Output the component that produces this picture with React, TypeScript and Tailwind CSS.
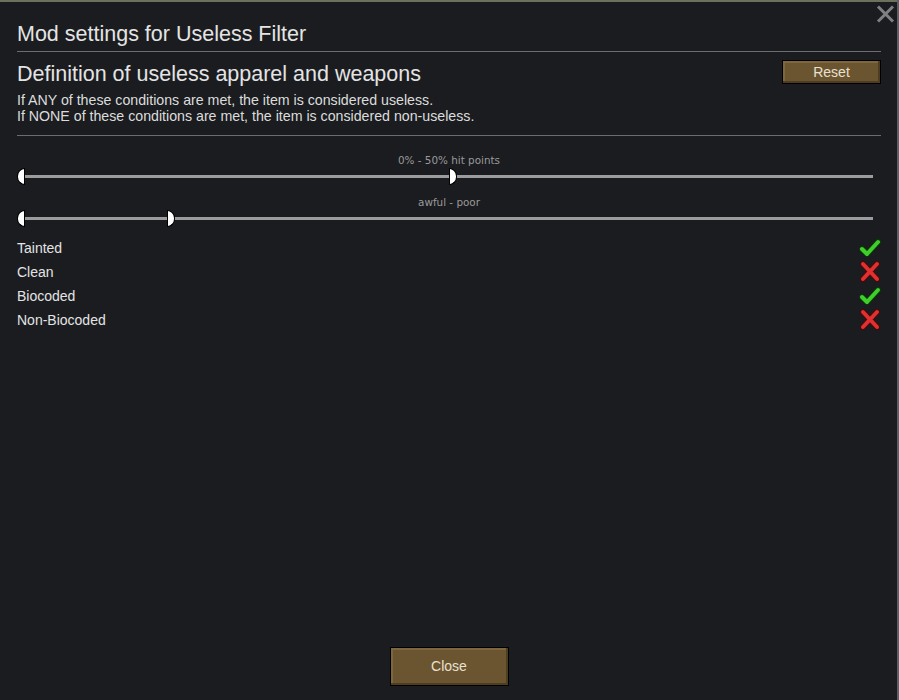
import { X } from 'lucide-react';

const rows = [
  { label: 'Tainted', on: true },
  { label: 'Clean', on: false },
  { label: 'Biocoded', on: true },
  { label: 'Non-Biocoded', on: false },
];

function Check() {
  return (
    <svg width="24" height="22" viewBox="0 0 24 22">
      <path d="M4 12 L9 17 L20 5" fill="none" stroke="#0a3a0a" strokeWidth="6" strokeLinecap="round" strokeLinejoin="round" />
      <path d="M4 12 L9 17 L20 5" fill="none" stroke="#3fcf2a" strokeWidth="4" strokeLinecap="round" strokeLinejoin="round" />
    </svg>
  );
}

function Cross() {
  return (
    <svg width="24" height="22" viewBox="0 0 24 22">
      <path d="M5 3 L19 18 M19 3 L5 18" fill="none" stroke="#4a0a0a" strokeWidth="6" strokeLinecap="round" />
      <path d="M5 3 L19 18 M19 3 L5 18" fill="none" stroke="#e03030" strokeWidth="4" strokeLinecap="round" />
    </svg>
  );
}

function Slider({ label, to }: { label: string; to: number }) {
  return (
    <div className="flex flex-col">
      <div className="h-[18px] text-center text-[10.4px] leading-[18px] text-[#9a9a9a] font-['DejaVu_Sans',sans-serif]">
        {label}
      </div>
      <div className="relative h-[14px] mr-[8px] ml-[1px]">
        <div className="absolute top-[6px] left-0 right-0 h-[3px] bg-[#9c9c9c]" />
        <div className="absolute -top-[1px] -left-[1px] h-[17px] w-[8px] rounded-l-full bg-white border border-black" />
        <div
          className="absolute -top-[1px] h-[17px] w-[8px] rounded-r-full bg-white border border-black"
          style={{ left: to }}
        />
      </div>
    </div>
  );
}

function GoldButton({ children, className }: { children: string; className: string }) {
  return (
    <button
      className={`border border-black bg-[#6b5530] text-[#e8e0d0] shadow-[inset_-2px_-2px_0_#4e3d20,inset_2px_2px_0_#7d6640] ${className}`}
    >
      {children}
    </button>
  );
}

export default function App() {
  return (
    <div className="relative h-[700px] w-[899px] overflow-hidden bg-[#1a1c20] font-['Liberation_Sans',Arial,sans-serif] text-[#e4e4e4]">
      <div className="h-[2px] bg-[#6e705e]" />
      <div className="absolute top-0 right-0 bottom-0 w-[2px] bg-[#5b5f66]" />
      <svg className="absolute top-[5px] right-[4px]" width="19" height="18" viewBox="0 0 19 18">
        <path d="M2 1.5 L17 16.5 M17 1.5 L2 16.5" stroke="#7e8082" strokeWidth="3" />
      </svg>

      <div className="flex h-[698px] flex-col pl-[17px] pr-[18px]">
        <h1 className="mt-[17px] h-[30px] text-[21.5px] leading-[30px]">Mod settings for Useless Filter</h1>
        <div className="mt-[2px] h-px bg-[#6a6c6e]" />

        <div className="mt-[7px] flex justify-between">
          <h2 className="h-[30px] text-[21.5px] leading-[30px]">Definition of useless apparel and weapons</h2>
          <GoldButton className="mt-[1px] h-[24px] w-[99px] text-[14px] leading-none">Reset</GoldButton>
        </div>
        <p className="mt-[3px] text-[14.2px] leading-[16px] text-[#dcdcdc]">
          If ANY of these conditions are met, the item is considered useless.
          <br />
          If NONE of these conditions are met, the item is considered non-useless.
        </p>
        <div className="mt-[11px] h-px bg-[#6a6c6e]" />

        <div className="mt-[15px] flex flex-col gap-[10px]">
          <Slider label="0% - 50% hit points" to={431} />
          <Slider label="awful - poor" to={149} />
        </div>

        <div className="mt-[11px] flex flex-col">
          {rows.map(r => (
            <div key={r.label} className="flex h-[24px] items-center justify-between">
              <span className="text-[14px] text-[#e4e4e4]">{r.label}</span>
              <span className="-mr-[1px]">{r.on ? <Check /> : <Cross />}</span>
            </div>
          ))}
        </div>

        <div className="mt-auto mb-[14px] flex justify-center">
          <GoldButton className="h-[39px] w-[119px] text-[14px]">Close</GoldButton>
        </div>
      </div>
    </div>
  );
}
